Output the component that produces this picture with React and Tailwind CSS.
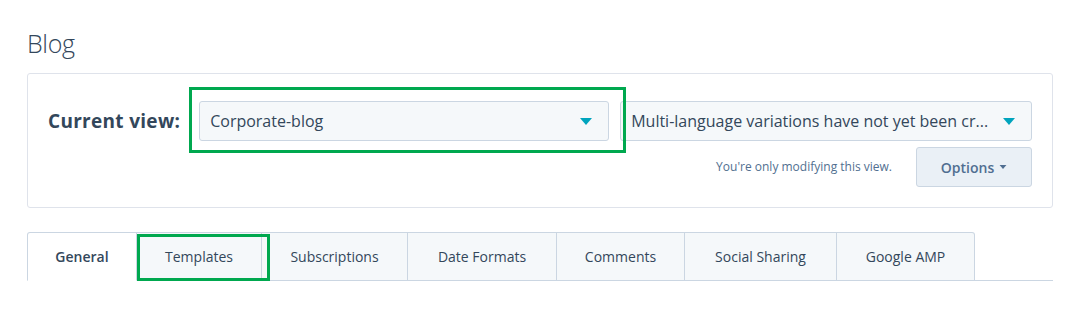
import React from 'react'

const TABS = ['General', 'Templates', 'Subscriptions', 'Date Formats', 'Comments', 'Social Sharing', 'Google AMP']
const TAB_W = ['w-[110px]', 'w-[125px]', 'w-[146px]', 'w-[149px]', 'w-[128px]', 'w-[152px]', 'w-[138px]']

function Caret({ className }) {
  return (
    <svg viewBox="0 0 12 7" className={className} fill="currentColor">
      <path d="M0 0h12L6 7z" />
    </svg>
  )
}

function Select({ children, className }) {
  return (
    <div className={`flex h-[40px] shrink-0 items-center justify-between rounded-[3px] border border-[#cbd6e2] bg-[#f5f8fa] pl-[10px] pr-[16px] text-[16px] text-[#33475b] ${className}`}>
      <span className="whitespace-nowrap">{children}</span>
      <Caret className="ml-2 h-[7px] w-[12px] shrink-0 text-[#00a4bd]" />
    </div>
  )
}

export default function App() {
  return (
    <div className="h-[318px] w-[1075px] bg-white px-[27px] pt-[27px] font-['Open_Sans',sans-serif] text-[#33475b]">
      <h1 className="text-[25px] font-light leading-[32px] tracking-[-0.3px]">Blog</h1>

      {/* view picker card */}
      <div className="relative mt-[14px] w-[1026px] rounded-[3px] border border-[#dfe3eb] pb-[20px] pl-[20px] pr-[20px] pt-[27px]">
        <div className="flex items-center">
          <span className="mr-[19px] shrink-0 whitespace-nowrap text-[19px] font-bold tracking-[0.3px]">Current view:</span>
          <Select className="w-[410px]">Corporate-blog</Select>
          <Select className="ml-[11px] w-[412px] text-[16px]">Multi-language variations have not yet been cr...</Select>
        </div>
        <div className="mt-[6px] flex items-center justify-end">
          <span className="mr-[24px] text-[12px] text-[#516f90]">You're only modifying this view.</span>
          <button className="flex h-[40px] w-[116px] items-center justify-center gap-[5px] rounded-[3px] border border-[#cbd6e2] bg-[#eaf0f6] text-[14px] font-semibold text-[#506e91]">
            Options
            <Caret className="h-[4px] w-[8px]" />
          </button>
        </div>
        {/* annotation */}
        <div className="pointer-events-none absolute left-[161px] top-[13px] h-[66px] w-[437px] border-[3px] border-[#00a84f]" />
      </div>

      {/* tabs */}
      <div className="relative mt-[24px] flex w-[1026px] border-b border-[#cbd6e2]">
        {TABS.map((t, i) => (
          <div
            key={t}
            className={`-mb-px flex h-[49px] items-center justify-center border-t border-r border-[#cbd6e2] text-[14px] ${TAB_W[i]} ${
              i === 0
                ? 'rounded-tl-[3px] border-l border-b border-b-white bg-white font-semibold'
                : 'border-b bg-[#f5f8fa]'
            } ${i === TABS.length - 1 ? 'rounded-tr-[3px]' : ''}`}
          >
            {t}
          </div>
        ))}
        <div className="pointer-events-none absolute left-[110px] top-[2px] h-[47px] w-[133px] border-[3px] border-[#00a84f]" />
      </div>
    </div>
  )
}
